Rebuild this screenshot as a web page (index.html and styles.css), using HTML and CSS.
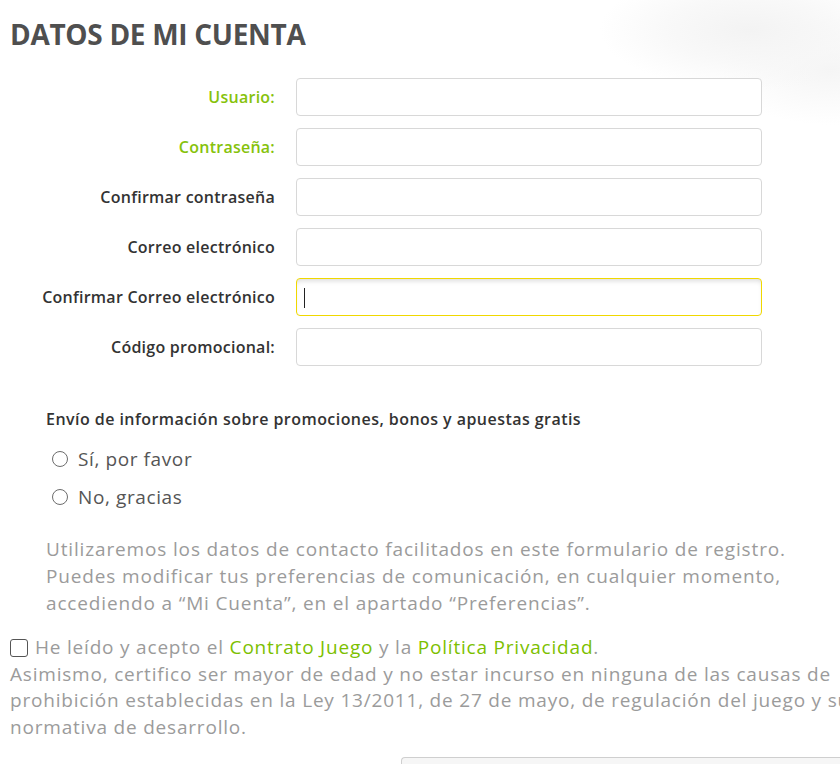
FILE: index.html
```html
<!DOCTYPE html>
<html lang="es">
<head>
<meta charset="utf-8">
<title>Datos de mi cuenta</title>
<link rel="stylesheet" href="styles.css">
</head>
<body>
<div class="page">
  <h1 class="title">DATOS DE MI CUENTA</h1>

  <div class="form">
    <div class="row">
      <label class="label label-green">Usuario:</label>
      <input class="field" type="text">
    </div>
    <div class="row">
      <label class="label label-green">Contraseña:</label>
      <input class="field" type="password">
    </div>
    <div class="row">
      <label class="label">Confirmar contraseña</label>
      <input class="field" type="password">
    </div>
    <div class="row">
      <label class="label">Correo electrónico</label>
      <input class="field" type="text">
    </div>
    <div class="row">
      <label class="label">Confirmar Correo electrónico</label>
      <div class="field-wrap">
        <input class="field field-focus" type="text">
        <span class="caret"></span>
      </div>
    </div>
    <div class="row">
      <label class="label">Código promocional:</label>
      <input class="field" type="text">
    </div>
  </div>

  <div class="promo">
    <div class="promo-title">Envío de información sobre promociones, bonos y apuestas gratis</div>
    <label class="radio-row"><input class="radio" type="radio" name="promo"><span>Sí, por favor</span></label>
    <label class="radio-row"><input class="radio" type="radio" name="promo"><span>No, gracias</span></label>
    <p class="promo-note">Utilizaremos los datos de contacto facilitados en este formulario de registro.<br>Puedes modificar tus preferencias de comunicación, en cualquier momento,<br>accediendo a “Mi Cuenta”, en el apartado “Preferencias”.</p>
  </div>

  <div class="legal">
    <label class="legal-first"><input class="check" type="checkbox">He leído y acepto el <a class="link" href="#">Contrato Juego</a> y la <a class="link" href="#">Política Privacidad</a>.</label>
    <div class="legal-text">Asimismo, certifico ser mayor de edad y no estar incurso en ninguna de las causas de<br>prohibición establecidas en la Ley 13/2011, de 27 de mayo, de regulación del juego y su<br>normativa de desarrollo.</div>
  </div>

  <div class="bottom-box"></div>
</div>
</body>
</html>
```

FILE: styles.css
```css
html, body {
  margin: 0;
  padding: 0;
  overflow: hidden;
  background: #fff;
}

body {
  font-family: "Open Sans", "Noto Sans", sans-serif;
  color: #333;
  width: 840px;
  height: 764px;
  background:
    radial-gradient(ellipse 150px 60px at 750px 30px, #f3f3f3 0%, rgba(246,246,246,0.7) 55%, rgba(255,255,255,0) 100%),
    radial-gradient(ellipse 110px 55px at 830px 70px, #f5f5f5 0%, rgba(255,255,255,0) 100%),
    #fff;
}

.page {
  padding-left: 10px;
}

.title {
  margin: 17px 0 0;
  font-size: 28px;
  line-height: 34px;
  font-weight: 700;
  color: #4f4f4f;
  letter-spacing: -0.3px;
}

.form {
  margin-top: 27px;
  display: flex;
  flex-direction: column;
  gap: 12px;
}

.row {
  display: grid;
  grid-template-columns: 265px 466px;
  column-gap: 21px;
  align-items: center;
  height: 38px;
}

.label {
  text-align: right;
  font-size: 16px;
  font-weight: 600;
  color: #333;
  letter-spacing: 0.25px;
}

.label-green {
  color: #86c20b;
}

.field {
  box-sizing: border-box;
  width: 466px;
  height: 38px;
  border: 1px solid #d8d8d8;
  border-radius: 4px;
  background: #fff;
  outline: none;
  margin: 0;
  padding: 0 8px;
  font: inherit;
}

.field-wrap {
  position: relative;
  height: 38px;
}

.field-focus {
  border-color: #f0d800;
  box-shadow: inset 0 4px 5px -2px rgba(0,0,0,0.14);
}

.caret {
  position: absolute;
  left: 8px;
  top: 10px;
  width: 1px;
  height: 20px;
  background: #222;
}

.promo {
  margin: 43px 0 0 36px;
}

.promo-title {
  font-size: 16px;
  font-weight: 600;
  color: #333;
  line-height: 20px;
  letter-spacing: 0.45px;
}

.radio-row {
  display: flex;
  align-items: center;
  gap: 10px;
  height: 38px;
  margin-left: 6px;
  font-size: 19px;
  letter-spacing: 0.6px;
  color: #555;
}

.promo-title + .radio-row {
  margin-top: 11px;
}

.radio {
  appearance: none;
  -webkit-appearance: none;
  box-sizing: border-box;
  width: 16px;
  height: 16px;
  margin: 0;
  border: 1.5px solid #6c6c6c;
  border-radius: 50%;
  background: #fff;
}

.promo-note {
  margin: 20px 0 0;
  font-size: 19px;
  line-height: 27px;
  letter-spacing: 0.85px;
  color: #9b9b9b;
  white-space: nowrap;
}

.legal {
  margin-top: 17px;
  font-size: 19px;
  line-height: 26.5px;
  letter-spacing: 0.8px;
  color: #9b9b9b;
  white-space: nowrap;
}

.legal-first {
  display: block;
}

.check {
  appearance: none;
  -webkit-appearance: none;
  box-sizing: border-box;
  display: inline-block;
  vertical-align: -3px;
  width: 18px;
  height: 18px;
  margin: 0 7px 0 0;
  border: 1.5px solid #555;
  border-radius: 3px;
  background: #fff;
}

.link {
  color: #7cc000;
  text-decoration: none;
}

.bottom-box {
  margin: 17px 0 0 391px;
  height: 40px;
  border: 1px solid #cfcfcf;
  border-right: none;
  border-radius: 4px 0 0 0;
  background: #f6f6f6;
}
```
